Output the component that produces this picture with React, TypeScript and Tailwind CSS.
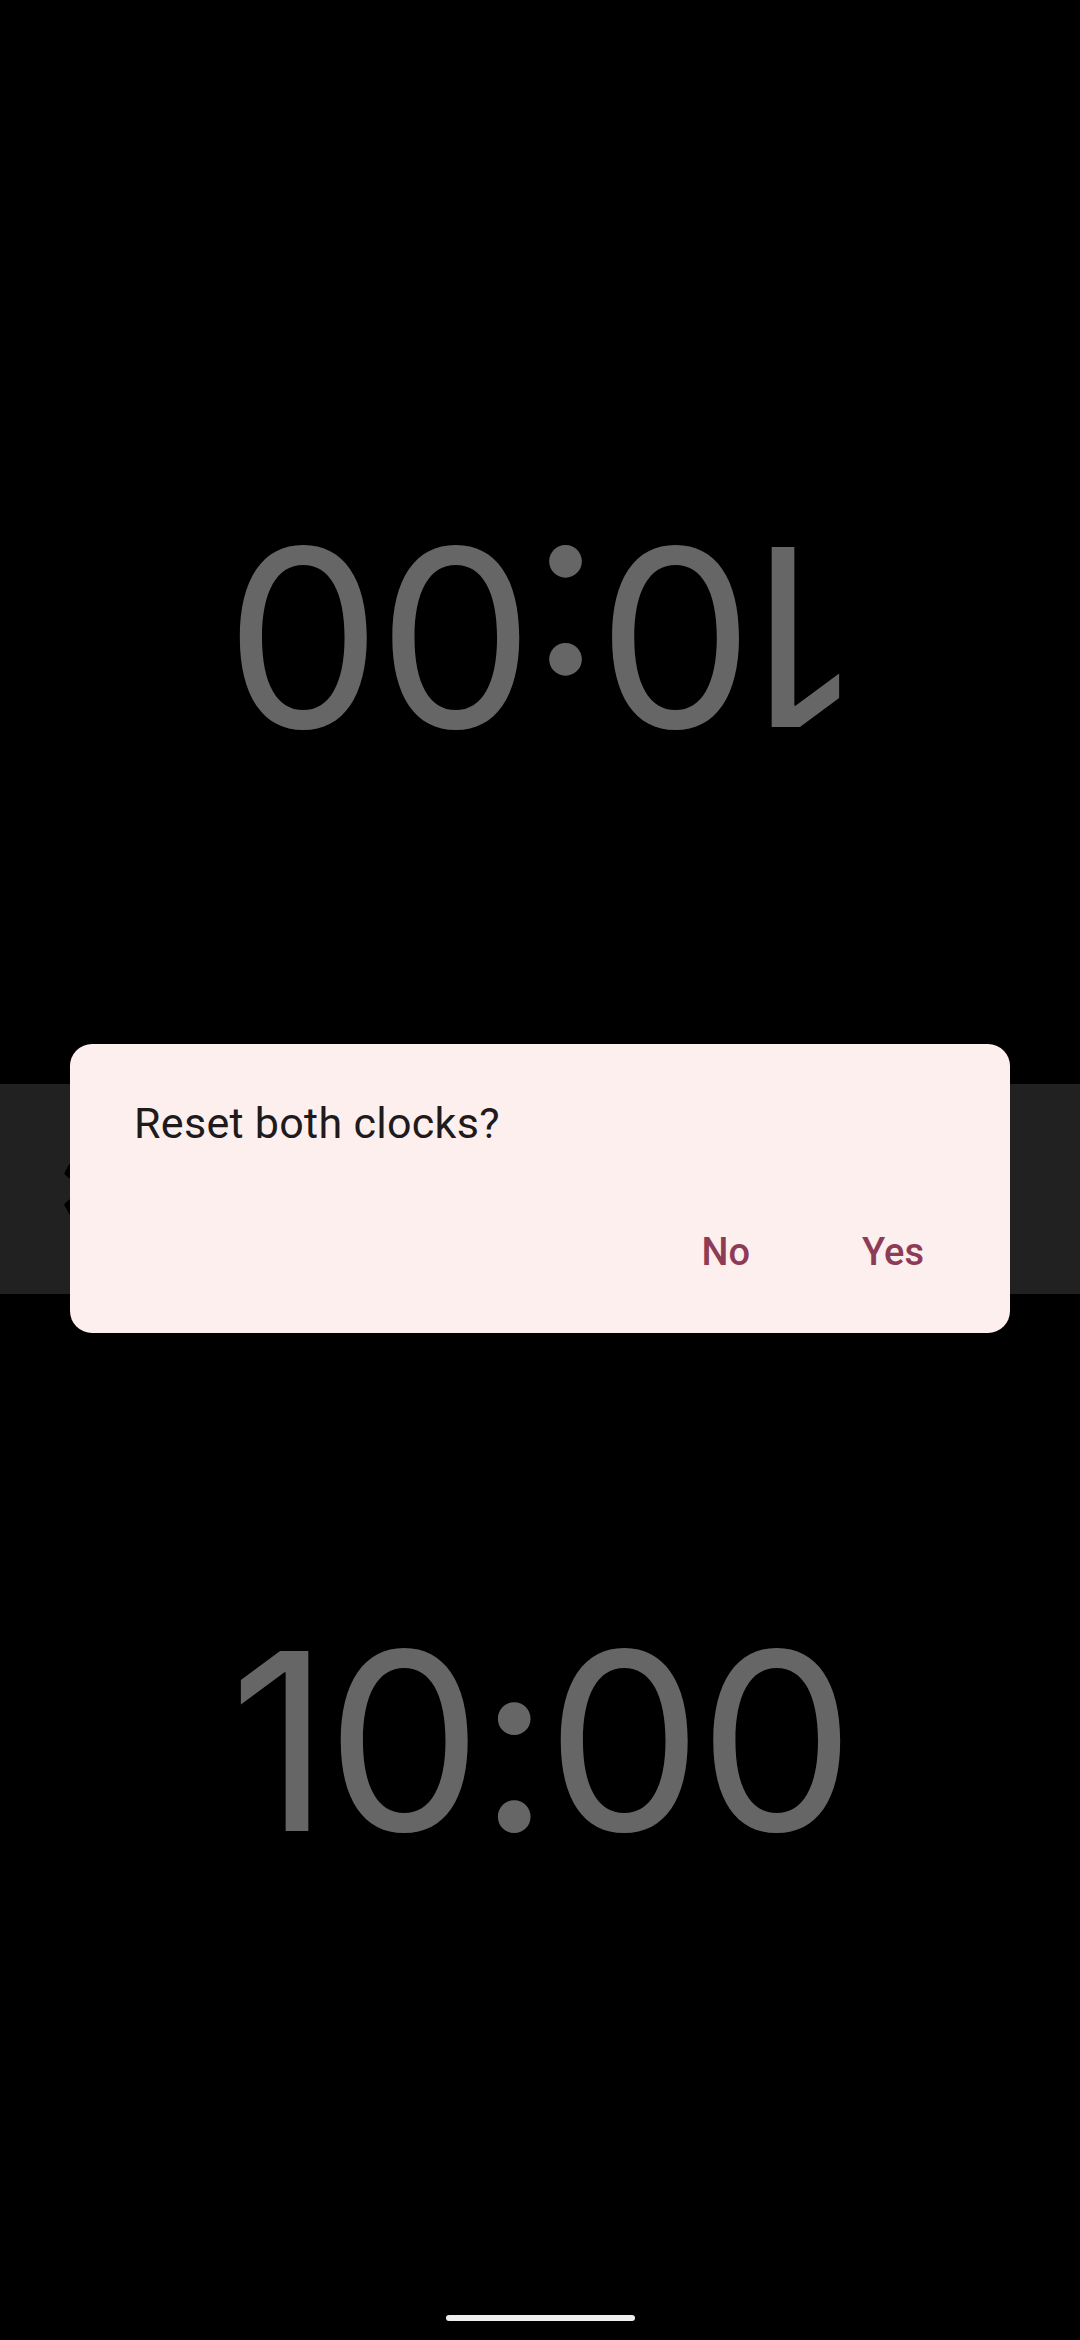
import React from "react";

const clockFont = { fontFamily: "Inter, Roboto, sans-serif" };

function GearIcon() {
  return (
    <svg viewBox="0 0 24 24" className="w-[130px] h-[130px]" fill="#000">
      <path d="M19.14 12.94c.04-.3.06-.61.06-.94 0-.32-.02-.64-.07-.94l2.03-1.58c.18-.14.23-.41.12-.61l-1.92-3.32c-.12-.22-.37-.29-.59-.22l-2.39.96c-.5-.38-1.03-.7-1.62-.94l-.36-2.54c-.04-.24-.24-.41-.48-.41h-3.84c-.24 0-.43.17-.47.41l-.36 2.54c-.59.24-1.13.57-1.62.94l-2.39-.96c-.22-.08-.47 0-.59.22L2.74 8.87c-.12.21-.08.47.12.61l2.03 1.58c-.05.3-.09.63-.09.94s.02.64.07.94l-2.03 1.58c-.18.14-.23.41-.12.61l1.92 3.32c.12.22.37.29.59.22l2.39-.96c.5.38 1.03.7 1.62.94l.36 2.54c.05.24.24.41.48.41h3.84c.24 0 .44-.17.47-.41l.36-2.54c.59-.24 1.13-.56 1.62-.94l2.39.96c.22.08.47 0 .59-.22l1.92-3.32c.12-.22.07-.47-.12-.61l-2.01-1.58zM12 15.6c-1.98 0-3.6-1.62-3.6-3.6s1.62-3.6 3.6-3.6 3.6 1.62 3.6 3.6-1.62 3.6-3.6 3.6z" />
    </svg>
  );
}

export default function App() {
  return (
    <div className="relative w-[1080px] h-[2340px] bg-black overflow-hidden">
      <div className="flex flex-col h-full">
        {/* status bar area */}
        <div className="h-[190px]" />

        {/* Top player clock (upside down) */}
        <div className="h-[894px] flex items-center justify-center">
          <div
            className="rotate-180 text-[248px] leading-none font-normal tracking-[-4px] text-[#666666]"
            style={clockFont}
          >
            10:00
          </div>
        </div>

        {/* Controls bar */}
        <div className="h-[210px] bg-[#212121] flex items-center pl-[50px]">
          <GearIcon />
        </div>

        {/* Bottom player clock */}
        <div className="flex-1 flex items-center justify-center">
          <div
            className="text-[248px] leading-none font-normal tracking-[-4px] text-[#666666]"
            style={clockFont}
          >
            10:00
          </div>
        </div>

        {/* Gesture nav */}
        <div className="h-[152px] flex items-end justify-center pb-[19px]">
          <div className="w-[189px] h-[6px] rounded-full bg-[#eeeeee]" />
        </div>
      </div>

      {/* Reset dialog */}
      <div
        className="absolute left-[70px] top-[1044px] w-[940px] h-[289px] rounded-[22px] bg-[#fcefee] flex flex-col pl-[64px] pr-[86px] pt-[51px]"
        style={{ fontFamily: "Roboto, 'Noto Sans', sans-serif" }}
      >
        <p className="text-[43px] leading-[56px] tracking-[0.3px] text-[#201a1b]">Reset both clocks?</p>
        <div className="mt-[73px] flex justify-end gap-[112px] text-[38px] leading-[56px] font-medium text-[#8e3b55]">
          <button>No</button>
          <button>Yes</button>
        </div>
      </div>
    </div>
  );
}
